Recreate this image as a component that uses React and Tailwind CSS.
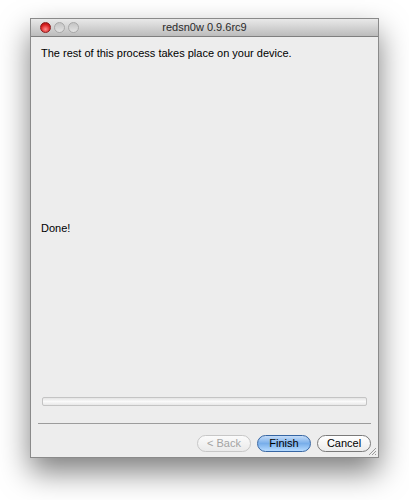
import React from "react";

export default function App() {
  const font = { fontFamily: '"Liberation Sans", Arial, sans-serif' };
  return (
    <div className="w-[409px] h-[500px] bg-white relative" style={font}>
      <div className="absolute left-[30px] top-[18px] w-[349px] h-[440px] flex flex-col border border-[#8a8a8a] shadow-[0_14px_28px_rgba(0,0,0,0.5)] bg-[#ededed]">
        {/* title bar */}
        <div className="h-[18px] flex items-center relative bg-gradient-to-b from-[#e9e9e9] to-[#bcbcbc] border-b border-[#7f7f7f]">
          <div className="flex gap-[3px] pl-[9px]">
            <span className="w-[11px] h-[11px] rounded-full bg-[radial-gradient(circle_at_50%_70%,#ff8c8c,#d81f1f_60%,#9a1010)] border border-[#8c1b1b]" />
            <span className="w-[11px] h-[11px] rounded-full bg-gradient-to-b from-[#c4c4c4] to-[#e3e3e3] border border-[#a8a8a8]" />
            <span className="w-[11px] h-[11px] rounded-full bg-gradient-to-b from-[#c4c4c4] to-[#e3e3e3] border border-[#a8a8a8]" />
          </div>
          <div className="absolute inset-0 flex items-center justify-center text-[11px] text-[#2a2a2a]">
            redsn0w 0.9.6rc9
          </div>
        </div>
        {/* content */}
        <div className="flex-1 flex flex-col px-[10px] pt-[9px]">
          <div className="text-[11px] text-black leading-[14px]">
            The rest of this process takes place on your device.
          </div>
          <div className="mt-[161px] text-[11px] text-black leading-[14px]">Done!</div>
          <div className="flex-1" />
          <div className="mx-[1px] h-[9px] rounded-[2px] border border-[#c4c4c4] bg-gradient-to-b from-[#e4e4e4] via-[#fafafa] to-[#e8e8e8]" />
          <div className="mt-[17px] mx-[-3px] h-px bg-[#9c9c9c]" />
          <div className="flex justify-end gap-[6px] mt-[11px] mb-[5px] mr-[-3px]">
            <button className="w-[54px] h-[17px] rounded-full border border-[#c7c7c7] bg-gradient-to-b from-[#fbfbfb] to-[#eaeaea] text-[11px] text-[#a3a3a3] leading-none">
              &lt; Back
            </button>
            <button className="w-[54px] h-[17px] rounded-full border border-[#3766a3] bg-gradient-to-b from-[#c4dcf8] via-[#78aeea] to-[#b6dbff] text-[11px] text-black leading-none">
              Finish
            </button>
            <button className="w-[54px] h-[17px] rounded-full border border-[#7a7a7a] bg-gradient-to-b from-[#ffffff] to-[#ececec] text-[11px] text-black leading-none">
              Cancel
            </button>
          </div>
        </div>
        <svg className="absolute right-[1px] bottom-[1px]" width="10" height="10" viewBox="0 0 10 10">
          <path d="M9 2 L2 9 M9 5 L5 9 M9 8 L8 9" stroke="#9a9a9a" strokeWidth="1" />
        </svg>
      </div>
    </div>
  );
}
